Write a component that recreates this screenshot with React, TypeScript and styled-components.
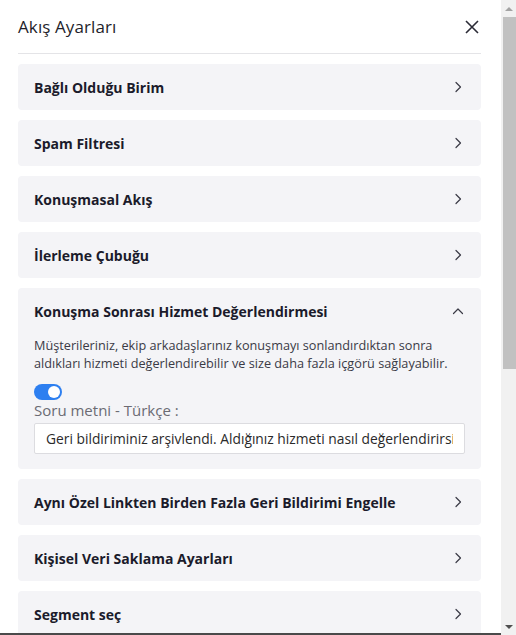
import styled, { createGlobalStyle } from "styled-components";

const GlobalStyle = createGlobalStyle`
  html, body {
    margin: 0;
    padding: 0;
    background: #fff;
    font-family: "Open Sans", "Noto Sans", sans-serif;
  }
  * { box-sizing: border-box; }
`;

const Frame = styled.div`
  position: relative;
  display: flex;
  width: 516px;
  height: 635px;
`;

const Scroller = styled.div`
  flex: 1;
  min-width: 0;
  height: 100%;
  overflow: hidden;
`;

const ScrollRail = styled.div`
  width: 15px;
  height: 100%;
  background: #f1f1f1;
  display: flex;
  flex-direction: column;
`;

const RailArrow = styled.div<{ $down?: boolean; $active?: boolean }>`
  height: 17px;
  display: flex;
  align-items: center;
  justify-content: center;

  &::after {
    content: "";
    border-left: 4px solid transparent;
    border-right: 4px solid transparent;
    ${(p) =>
      p.$down
        ? `border-top: 4px solid ${p.$active ? "#505050" : "#a3a3a3"};`
        : `border-bottom: 4px solid ${p.$active ? "#505050" : "#a3a3a3"};`}
  }
`;

const RailTrack = styled.div`
  flex: 1;
`;

const RailThumb = styled.div`
  height: 352px;
  margin-left: 2px;
  background: #c1c1c1;
`;

const BottomEdge = styled.div`
  position: absolute;
  left: 0;
  right: 15px;
  bottom: 0;
  height: 2px;
  background: #4a4a4a;
`;

const Panel = styled.div`
  padding: 0 20px 40px 18px;
`;

const Header = styled.div`
  display: flex;
  align-items: center;
  justify-content: space-between;
  height: 54px;
  border-bottom: 1px solid #e4e4e7;
  margin-bottom: 10px;
`;

const Title = styled.h2`
  margin: 0;
  font-size: 17px;
  font-weight: 400;
  color: #1e1e2a;
  letter-spacing: 0.1px;
`;

const CloseButton = styled.button`
  display: flex;
  border: 0;
  background: none;
  padding: 0;
  margin-right: 2px;
  cursor: pointer;
`;

const List = styled.div`
  display: flex;
  flex-direction: column;
  gap: 10px;
`;

const Card = styled.div`
  background: #f4f4f7;
  border-radius: 4px;
`;

const CardHead = styled.div`
  display: flex;
  align-items: center;
  justify-content: space-between;
  height: 46px;
  padding: 0 17px 0 16px;
`;

const CardTitle = styled.span`
  font-size: 14px;
  font-weight: 700;
  color: #1b1b2b;
`;

const CardBody = styled.div`
  padding: 2px 16px 15px 16px;
`;

const Description = styled.p`
  margin: 0;
  font-size: 12.7px;
  line-height: 18px;
  color: #3a3a46;
`;

const Toggle = styled.div<{ $on: boolean }>`
  margin-top: 12px;
  width: 28px;
  height: 16px;
  border-radius: 8px;
  background: ${(p) => (p.$on ? "#2d7ff0" : "#ccc")};
  display: flex;
  align-items: center;
  justify-content: ${(p) => (p.$on ? "flex-end" : "flex-start")};
  padding: 0 2px;

  &::after {
    content: "";
    width: 12px;
    height: 12px;
    border-radius: 50%;
    background: #fff;
  }
`;

const FieldLabel = styled.label`
  display: block;
  font-size: 15px;
  color: #6b6b73;
  margin: 0 0 3px;
`;

const TextInput = styled.input`
  display: block;
  width: 100%;
  height: 31px;
  border: 1px solid #dcdce0;
  border-radius: 2px;
  background: #fff;
  padding: 0 11px;
  font-family: "Open Sans", sans-serif;
  font-size: 13.8px;
  color: #2a2a2a;
  outline: none;
`;

const Chevron = ({ up }: { up?: boolean }) => (
  <svg width="12" height="12" viewBox="0 0 12 12" fill="none">
    <path
      d={up ? "M1.5 8.5 6 4l4.5 4.5" : "M4 1.5 8.5 6 4 10.5"}
      stroke="#3a3a46"
      strokeWidth="1.2"
      strokeLinecap="round"
      strokeLinejoin="round"
    />
  </svg>
);

const before = [
  "Bağlı Olduğu Birim",
  "Spam Filtresi",
  "Konuşmasal Akış",
  "İlerleme Çubuğu",
];

const after = [
  "Aynı Özel Linkten Birden Fazla Geri Bildirimi Engelle",
  "Kişisel Veri Saklama Ayarları",
  "Segment seç",
];

export default function App() {
  return (
    <Frame>
      <GlobalStyle />
      <Scroller>
        <Panel>
          <Header>
            <Title>Akış Ayarları</Title>
            <CloseButton aria-label="Kapat">
              <svg width="14" height="14" viewBox="0 0 14 14">
                <path
                  d="M1 1l12 12M13 1 1 13"
                  stroke="#2b2b36"
                  strokeWidth="1.6"
                />
              </svg>
            </CloseButton>
          </Header>
          <List>
            {before.map((s) => (
              <Card key={s}>
                <CardHead>
                  <CardTitle>{s}</CardTitle>
                  <Chevron />
                </CardHead>
              </Card>
            ))}
            <Card>
              <CardHead>
                <CardTitle>Konuşma Sonrası Hizmet Değerlendirmesi</CardTitle>
                <Chevron up />
              </CardHead>
              <CardBody>
                <Description>
                  Müşterileriniz, ekip arkadaşlarınız konuşmayı sonlandırdıktan
                  sonra aldıkları hizmeti değerlendirebilir ve size daha fazla
                  içgörü sağlayabilir.
                </Description>
                <Toggle $on />
                <FieldLabel>Soru metni - Türkçe :</FieldLabel>
                <TextInput
                  defaultValue="Geri bildiriminiz arşivlendi. Aldığınız hizmeti nasıl değerlendirirsiniz?"
                />
              </CardBody>
            </Card>
            {after.map((s) => (
              <Card key={s}>
                <CardHead>
                  <CardTitle>{s}</CardTitle>
                  <Chevron />
                </CardHead>
              </Card>
            ))}
          </List>
        </Panel>
      </Scroller>
      <ScrollRail>
        <RailArrow />
        <RailThumb />
        <RailTrack />
        <RailArrow $down $active />
      </ScrollRail>
      <BottomEdge />
    </Frame>
  );
}
